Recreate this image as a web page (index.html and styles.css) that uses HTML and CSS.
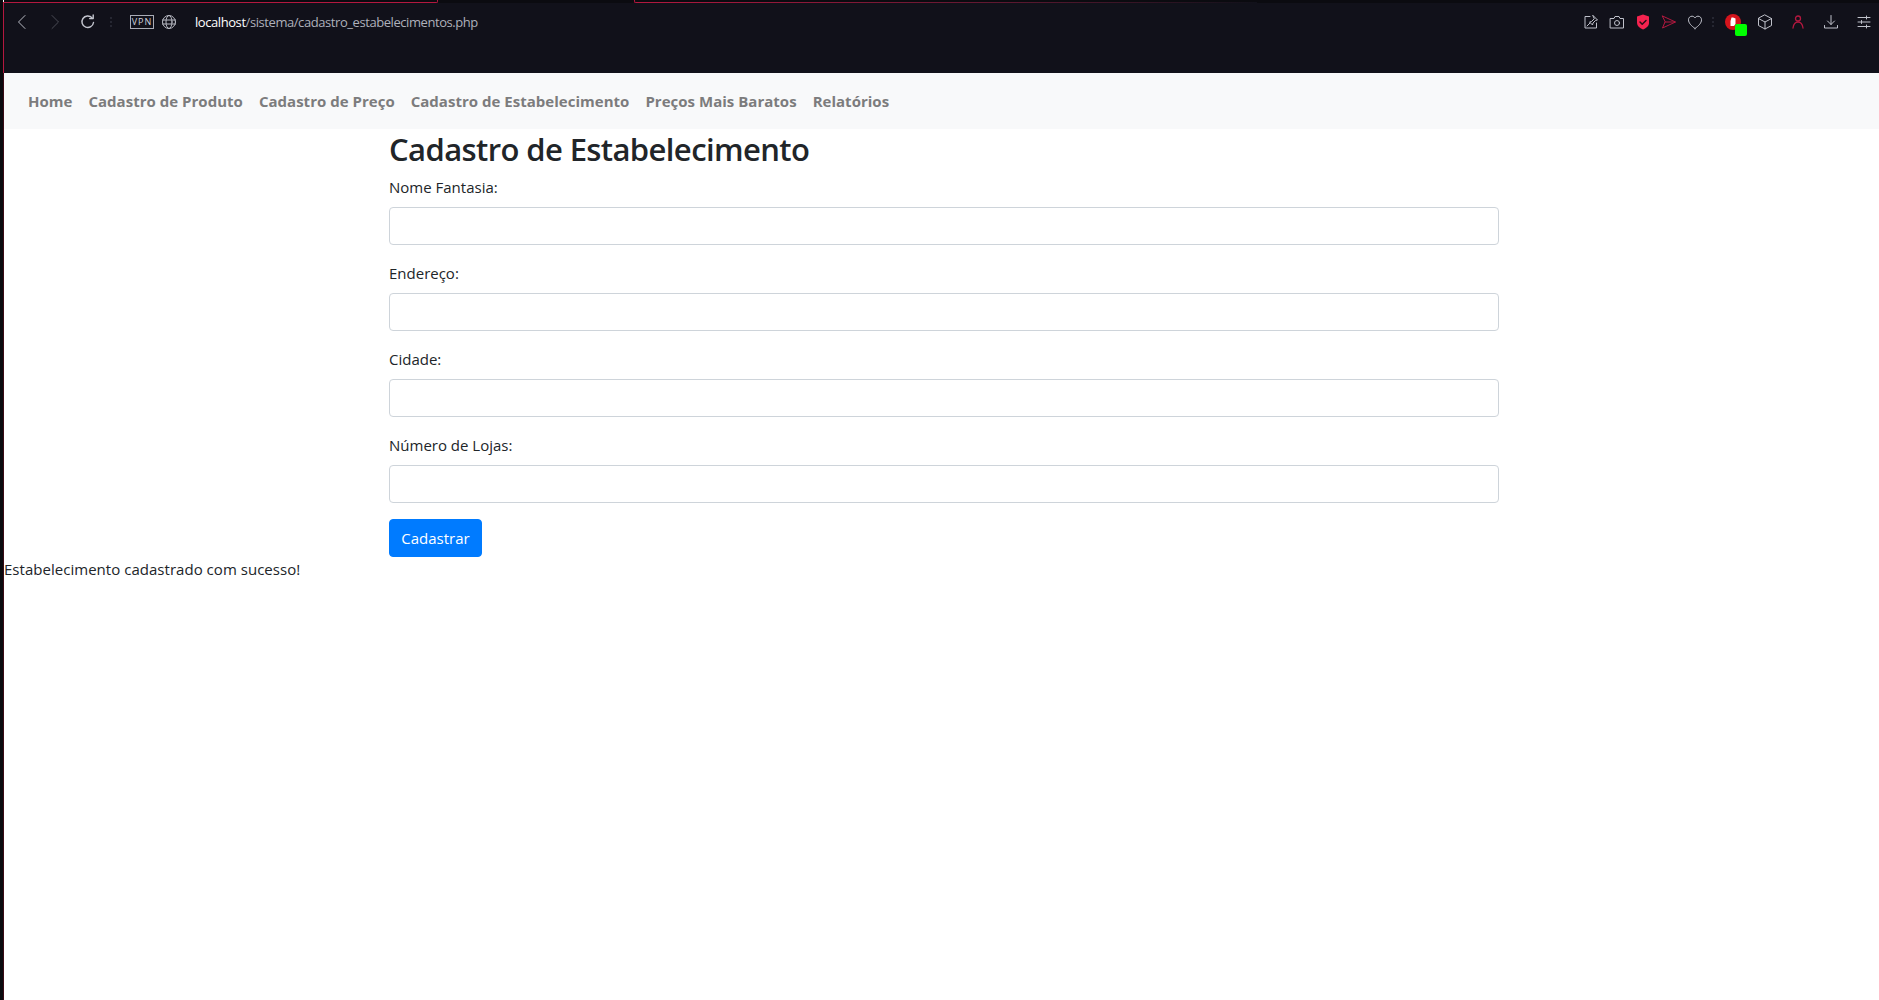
FILE: index.html
```html
<!DOCTYPE html>
<html lang="pt-BR">
<head>
<meta charset="utf-8">
<title>Cadastro de Estabelecimento</title>
<link rel="stylesheet" href="styles.css">
</head>
<body>
<div class="frame">
  <header class="browser">
    <div class="tabline">
      <span class="tab-left"></span>
      <span class="tab-gap"></span>
      <span class="tab-corner"></span>
      <span class="tab-fade"></span>
    </div>
    <div class="toolbar">
      <div class="tool-left">
        <svg class="ico" viewBox="0 0 16 16"><path d="M11 1.500 4.500 8l6.500 6.500" stroke="#b9bbc4"/></svg>
        <svg class="ico fwd" viewBox="0 0 16 16"><path d="M5 1.500 11.500 8 5 14.500" stroke="#4a4b55"/></svg>
        <svg class="ico reload" viewBox="0 0 16 16"><path d="M13.500 8.500A5.800 5.800 0 1 1 12 3.800" stroke="#c4c6cf" stroke-width="1.400"/><path d="M13.200 1v3.600H9.600" stroke="#c4c6cf" stroke-width="1.400"/></svg>
        <span class="dots"></span>
        <span class="vpn">VPN</span>
        <svg class="ico globe" viewBox="0 0 16 16"><g stroke="#b9bbc4"><circle cx="8" cy="8" r="6.500"/><ellipse cx="8" cy="8" rx="3" ry="6.500"/><path d="M1.500 6h13M1.500 10h13"/></g></svg>
        <span class="url"><b>localhost</b>/sistema/cadastro_estabelecimentos.php</span>
      </div>
      <div class="tool-right">
        <svg class="ico" viewBox="0 0 16 16"><g stroke="#bfc1ca"><path d="M7 2.500H2v11.500h11.500V9"/><path d="M10 1.500 14.500 6l-2 .5-2.500 2.500-.5 2-3-3 2-.5L11 5z"/><path d="M7 9 4 12"/></g></svg>
        <svg class="ico g1" viewBox="0 0 16 16"><g stroke="#bfc1ca"><path d="M1.500 4.500h3.500l1-2h4l1 2h3.500v9.500h-13z"/><circle cx="8" cy="9" r="2.500"/></g></svg>
        <svg class="ico g1" viewBox="0 0 16 16"><path d="M8 .5 14 2.500v6.500c0 3-2.500 5-6 6.500C4.500 14 2 12 2 9V2.500z" fill="#f5234f"/><path d="M5 8l2.200 2.200L11 6.500" stroke="#2a0d18" stroke-width="1.500"/></svg>
        <svg class="ico g1" viewBox="0 0 16 16"><path d="M1.500 2 14.500 8 1.500 14 4 8zM4 8h10" stroke="#b3183f"/></svg>
        <svg class="ico g1" viewBox="0 0 16 16"><path d="M8 14.500C4 11.500 1.500 9 1.500 5.800 1.500 3.500 3.200 2.200 5 2.200c1.300 0 2.400.7 3 1.800.6-1.100 1.700-1.800 3-1.800 1.800 0 3.500 1.300 3.500 3.600 0 3.200-2.500 5.700-6.500 8.700z" stroke="#bfc1ca"/></svg>
        <span class="dots dots-r"></span>
        <span class="adblock">
          <svg class="ico" viewBox="0 0 16 16"><circle cx="8" cy="8" r="8" fill="#d4141c"/><path d="M5.500 12V7l1-3.500 1.500 0 2.500 1V10L9 12z" fill="#fff"/></svg>
          <span class="badge"></span>
        </span>
        <svg class="ico cube" viewBox="0 0 16 16"><g stroke="#bfc1ca"><path d="M8 1l6.500 3.500v7L8 15l-6.500-3.500v-7z"/><path d="M1.500 4.500 8 8l6.500-3.500M8 8v7"/></g></svg>
        <svg class="ico user" viewBox="0 0 16 16"><g stroke="#b3183f" stroke-width="1.300"><circle cx="8" cy="4.500" r="2.500"/><path d="M3 14c.5-3.500 2.200-6 5-6s4.500 2.500 5 6"/></g></svg>
        <svg class="ico down" viewBox="0 0 16 16"><g stroke="#bfc1ca"><path d="M8 1.500v9M4.500 7 8 10.500 11.500 7"/><path d="M1.500 11.500v2.500h13v-2.500"/></g></svg>
        <svg class="ico user" viewBox="0 0 16 16"><g stroke="#bfc1ca"><path d="M2 3.500h12M2 8h12M2 12.500h12"/><path d="M10.500 2v3M5.500 6.500v3M10.500 11v3"/></g></svg>
      </div>
    </div>
  </header>

  <nav class="navbar">
    <a class="nav-link" href="#">Home</a>
    <a class="nav-link" href="#">Cadastro de Produto</a>
    <a class="nav-link" href="#">Cadastro de Preço</a>
    <a class="nav-link" href="#">Cadastro de Estabelecimento</a>
    <a class="nav-link" href="#">Preços Mais Baratos</a>
    <a class="nav-link" href="#">Relatórios</a>
  </nav>

  <main class="container">
    <h2 class="title">Cadastro de Estabelecimento</h2>
    <form>
      <div class="form-group">
        <label for="nome">Nome Fantasia:</label>
        <input id="nome" class="form-control" type="text">
      </div>
      <div class="form-group">
        <label for="endereco">Endereço:</label>
        <input id="endereco" class="form-control" type="text">
      </div>
      <div class="form-group">
        <label for="cidade">Cidade:</label>
        <input id="cidade" class="form-control" type="text">
      </div>
      <div class="form-group">
        <label for="lojas">Número de Lojas:</label>
        <input id="lojas" class="form-control" type="text">
      </div>
      <button class="btn" type="button">Cadastrar</button>
    </form>
  </main>
  <p class="message">Estabelecimento cadastrado com sucesso!</p>
</div>
</body>
</html>
```
FILE: styles.css
```css
* { box-sizing: border-box; }
html, body { margin: 0; height: 100%; overflow: hidden; background: #fff; }
body {
  font-family: "Open Sans", "Noto Sans", "Liberation Sans", sans-serif;
  font-size: 15px;
  line-height: 24px;
  color: #212529;
}
.frame {
  height: 1000px;
  width: 1879px;
  border-left: 3px solid #0a0a0e;
  padding-left: 1px;
  position: relative;
}
.frame::before {
  content: "";
  position: absolute;
  left: 0;
  top: 2px;
  height: 71px;
  width: 1px;
  background: #b3183f;
}
.frame::after {
  content: "";
  position: absolute;
  left: 0;
  top: 73px;
  bottom: 0;
  width: 1px;
  background: #3a0a14;
}
.browser {
  height: 73px;
  background: #11111a;
  display: flex;
  flex-direction: column;
}
.tabline { display: flex; height: 3px; background: #0b0b10; }
.tab-left {
  width: 434px;
  height: 3px;
  border-right: 1px solid #b3183f;
  border-bottom: 1px solid #b3183f;
  border-bottom-right-radius: 2px;
}
.tab-gap { width: 196px; }
.tab-corner {
  width: 3px;
  height: 3px;
  border-left: 1px solid #b3183f;
  border-bottom: 1px solid #b3183f;
  border-bottom-left-radius: 2px;
}
.tab-fade {
  width: 620px;
  height: 1px;
  margin-top: 2px;
  background: linear-gradient(to right, #b3183f, #5c1830 60%, #11111a);
}
.toolbar {
  height: 38px;
  display: flex;
  justify-content: space-between;
  align-items: center;
  padding: 0 7px 0 10px;
}
.tool-left, .tool-right { display: flex; align-items: center; }
.ico { width: 16px; height: 16px; fill: none; flex: none; stroke-linecap: round; stroke-linejoin: round; }
.fwd { margin-left: 17px; }
.reload { margin-left: 17px; }
.dots { width: 2px; height: 10px; margin: 0 18px 0 14px; background: repeating-linear-gradient(#262732 0 2px, transparent 2px 4px); }
.dots-r { margin: 0 11px 0 9px; }
.vpn {
  width: 24px;
  height: 14px;
  border: 1px solid #a9abb5;
  color: #d0d2da;
  font-size: 9px;
  line-height: 12px;
  letter-spacing: 1px;
  text-align: center;
}
.globe { margin-left: 7px; }
.url { margin-left: 18px; font-size: 13px; color: #aeb0ba; letter-spacing: -0.43px; white-space: nowrap; }
.url b { font-weight: 400; color: #fff; }
.g1 { margin-left: 10px; }
.cube { margin-left: 16px; }
.user { margin-left: 17px; }
.down { margin-left: 17px; }
.adblock { position: relative; display: flex; }
.badge {
  position: absolute;
  right: -6px;
  bottom: -6px;
  width: 12px;
  height: 12px;
  border-radius: 2px;
  background: #00ff00;
}
.navbar {
  height: 56px;
  background: #f8f9fa;
  display: flex;
  align-items: center;
  padding: 0 16px;
}
.nav-link {
  padding: 0 8px;
  font-size: 15px;
  font-weight: 700;
  color: #7c7c7d;
  letter-spacing: 0.02px;
  text-decoration: none;
  white-space: nowrap;
}
.container {
  width: 1110px;
  margin-left: 385px;
}
.title {
  margin: 0 0 7px;
  padding-top: 1px;
  font-size: 31px;
  line-height: 38px;
  font-weight: 600;
  letter-spacing: -0.6px;
}
.form-group { margin-bottom: 16px; }
label { display: block; margin-bottom: 8px; }
.form-control {
  display: block;
  width: 100%;
  height: 38px;
  border: 1px solid #ced4da;
  border-radius: 4px;
  background: #fff;
}
.btn {
  display: block;
  height: 38px;
  width: 93px;
  border: 1px solid #007bff;
  border-radius: 4px;
  background: #007bff;
  color: #fff;
  font: inherit;
}
.message { margin: 0; letter-spacing: 0.03px; }
```
